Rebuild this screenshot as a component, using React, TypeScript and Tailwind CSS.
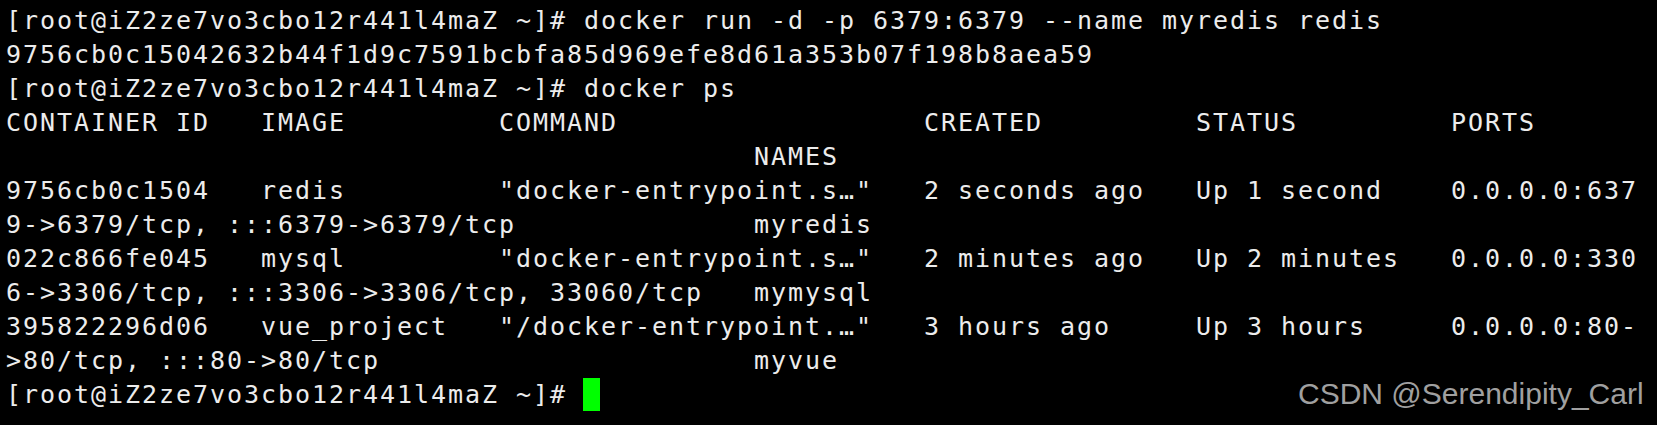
import React from "react";

const lines: string[] = [
  "[root@iZ2ze7vo3cbo12r441l4maZ ~]# docker pull redis",
  "[root@iZ2ze7vo3cbo12r441l4maZ ~]# docker run -d -p 6379:6379 --name myredis redis",
  "9756cb0c15042632b44f1d9c7591bcbfa85d969efe8d61a353b07f198b8aea59",
  "[root@iZ2ze7vo3cbo12r441l4maZ ~]# docker ps",
  "CONTAINER ID   IMAGE         COMMAND                  CREATED         STATUS         PORTS",
  "                                            NAMES",
  "9756cb0c1504   redis         \"docker-entrypoint.s…\"   2 seconds ago   Up 1 second    0.0.0.0:637",
  "9->6379/tcp, :::6379->6379/tcp              myredis",
  "022c866fe045   mysql         \"docker-entrypoint.s…\"   2 minutes ago   Up 2 minutes   0.0.0.0:330",
  "6->3306/tcp, :::3306->3306/tcp, 33060/tcp   mymysql",
  "395822296d06   vue_project   \"/docker-entrypoint.…\"   3 hours ago     Up 3 hours     0.0.0.0:80-",
  ">80/tcp, :::80->80/tcp                      myvue",
];

export default function App() {
  return (
    <div className="relative w-[1657px] h-[425px] overflow-hidden bg-black">
      <div
        className="-mt-[30px] pl-[6px] text-[25px] tracking-[1.95px] text-[#ececec] leading-[34px]"
        style={{ fontFamily: '"DejaVu Sans Mono", monospace' }}
      >
        {lines.map((l, i) => (
          <div key={i} className="h-[34px] whitespace-pre">
            {l}
          </div>
        ))}
        <div className="h-[34px] whitespace-pre">
          {"[root@iZ2ze7vo3cbo12r441l4maZ ~]# "}
          <span className="inline-block w-[17px] h-[33px] align-top bg-[#00ff00] -ml-[1px]" />
        </div>
      </div>
      <div
        className="absolute left-[1298px] top-[375px] text-[30px] leading-[38px] text-[#a0a0a0]"
        style={{ fontFamily: '"Liberation Sans", Arial, sans-serif' }}
      >
        CSDN @Serendipity_Carl
      </div>
    </div>
  );
}
